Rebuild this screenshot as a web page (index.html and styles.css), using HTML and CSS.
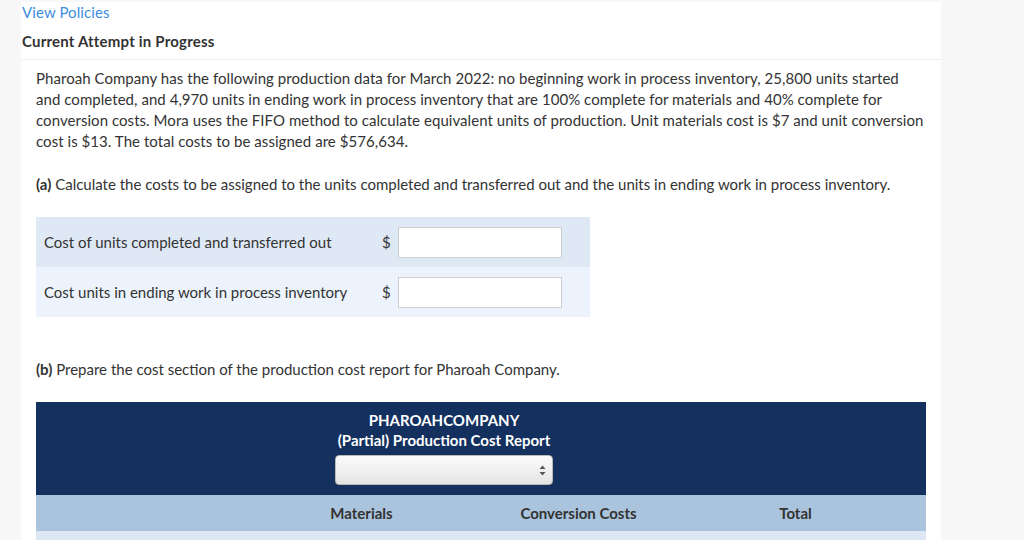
FILE: index.html
```html
<!DOCTYPE html>
<html lang="en">
<head>
<meta charset="utf-8">
<title>Current Attempt in Progress</title>
<link rel="stylesheet" href="styles.css">
</head>
<body>
<div class="panel">
  <div class="head">
    <a class="policies" href="#">View Policies</a>
    <div class="attempt">Current Attempt in Progress</div>
  </div>
  <div class="question">
    <p class="text">Pharoah Company has the following production data for March 2022: no beginning work in process inventory, 25,800 units started and completed, and 4,970 units in ending work in process inventory that are 100% complete for materials and 40% complete for conversion costs. Mora uses the FIFO method to calculate equivalent units of production. Unit materials cost is $7 and unit conversion cost is $13. The total costs to be assigned are $576,634.</p>
    <p class="part"><b>(a)</b> Calculate the costs to be assigned to the units completed and transferred out and the units in ending work in process inventory.</p>
    <div class="answers">
      <div class="row dark">
        <span class="label">Cost of units completed and transferred out</span>
        <span class="dollar">$</span>
        <input class="field" type="text">
      </div>
      <div class="row light">
        <span class="label">Cost units in ending work in process inventory</span>
        <span class="dollar">$</span>
        <input class="field" type="text">
      </div>
    </div>
    <p class="part part-b"><b>(b)</b> Prepare the cost section of the production cost report for Pharoah Company.</p>
    <div class="report">
      <div class="report-head">
        <div class="company">PHAROAHCOMPANY</div>
        <div class="title">(Partial) Production Cost Report</div>
        <div class="select">
          <svg class="arrows" width="7" height="11" viewBox="0 0 7 11"><path d="M3.5 0.5 L6.5 4 L0.5 4 Z M3.5 10.5 L6.5 7 L0.5 7 Z" fill="#555"/></svg>
        </div>
      </div>
      <div class="cols">
        <span></span>
        <span>Materials</span>
        <span>Conversion Costs</span>
        <span>Total</span>
        <span></span>
      </div>
      <div class="body-row"></div>
      <div class="body-row alt"></div>
    </div>
  </div>
</div>
</body>
</html>
```
FILE: styles.css
```css
html, body {
  margin: 0;
  padding: 0;
  background: #f7f7f7;
  font-family: Lato, "Open Sans", sans-serif;
  font-size: 15px;
  color: #333;
  overflow: hidden;
}

.panel {
  margin: 2px 0 0 21px;
  width: 920px;
  background: #fff;
  min-height: 600px;
}

.head {
  margin-left: 1px;
  padding-bottom: 8px;
  border-bottom: 1px solid #ececec;
}

.policies {
  display: block;
  line-height: 20px;
  color: #3f8de0;
  text-decoration: none;
  letter-spacing: 0.1px;
}

.attempt {
  margin-top: 9px;
  line-height: 20px;
  font-weight: bold;
  color: #333;
  letter-spacing: 0.2px;
}

.question {
  padding: 8px 15px 0 15px;
}

.text {
  margin: 0;
  line-height: 21px;
  letter-spacing: 0.05px;
}

.part {
  margin: 22px 0 0 0;
  line-height: 21px;
}

.part b {
  font-weight: bold;
}

.answers {
  margin-top: 22px;
  width: 554px;
}

.row {
  height: 50px;
  display: flex;
  align-items: center;
  padding-left: 8px;
}

.row.dark { background: #dfe8f5; }
.row.light { background: #edf3fc; }

.label {
  width: 338px;
}

.dollar {
  width: 16px;
}

.field {
  width: 164px;
  height: 31px;
  box-sizing: border-box;
  border: 1px solid #cfcfcf;
  background: #fff;
  margin: 0;
  padding: 0 4px;
}

.part-b {
  margin-top: 42px;
}

.report {
  margin-top: 22px;
  width: 890px;
}

.report-head {
  background: #13305e;
  color: #fff;
  display: flex;
  flex-direction: column;
  align-items: center;
  padding: 8px 74px 10px 0;
  font-weight: bold;
}

.company {
  line-height: 20px;
}

.title {
  line-height: 21px;
}

.select {
  margin-top: 4px;
  width: 218px;
  height: 30px;
  box-sizing: border-box;
  border: 1px solid #b9b9b9;
  border-radius: 4px;
  background: linear-gradient(#fbfbfb, #e4e4e4);
  display: flex;
  align-items: center;
  justify-content: flex-end;
  padding-right: 6px;
}

.cols {
  display: grid;
  grid-template-columns: 217px 217px 217px 217px 1fr;
  height: 36px;
  align-items: center;
  background: #a9c4dc;
  font-weight: bold;
  color: #333;
  text-align: center;
}

.body-row {
  height: 36px;
  background: #dde6f3;
}

.body-row.alt {
  background: #edf3fc;
}
```
